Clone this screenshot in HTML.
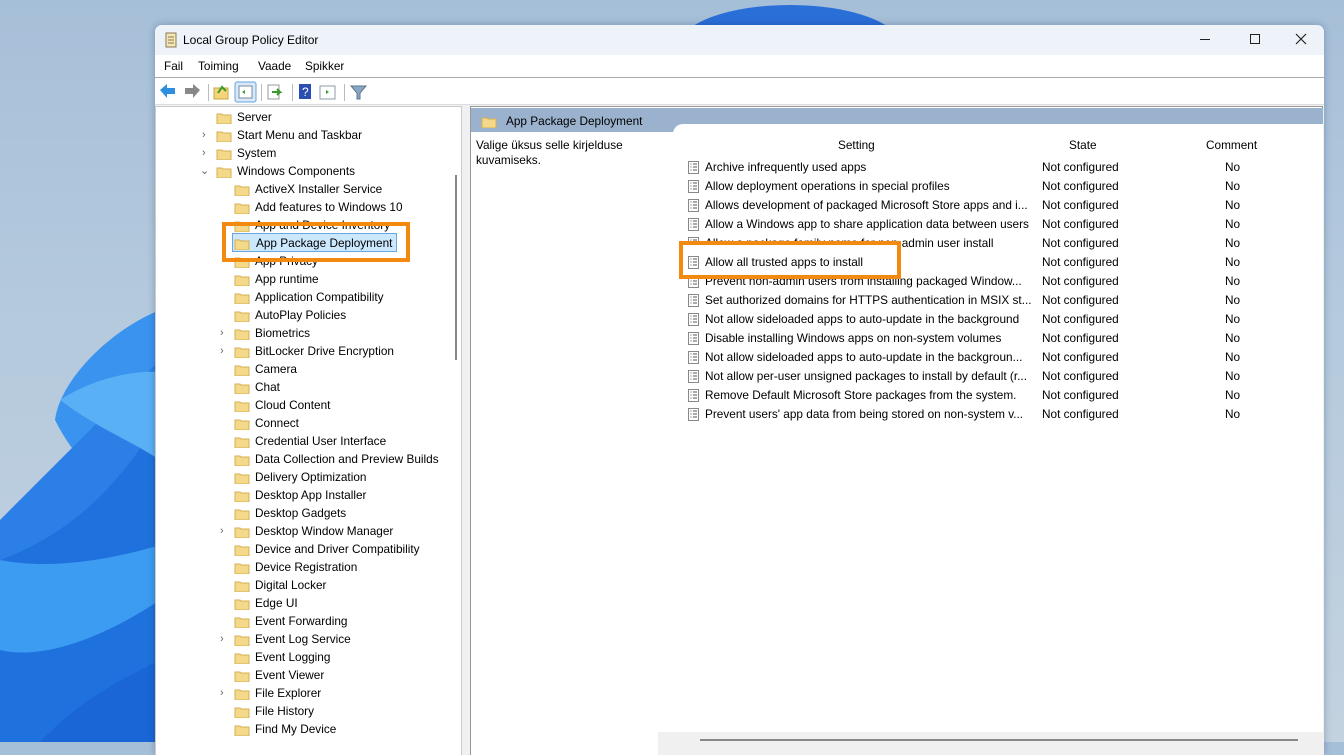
<!DOCTYPE html>
<html><head><meta charset="utf-8"><style>
*{margin:0;padding:0;box-sizing:border-box}
body{width:1344px;height:742px;overflow:hidden;position:relative;font-family:"Liberation Sans",sans-serif;font-size:11.8px;color:#000;
background:linear-gradient(180deg,#a6bfd8 0%,#b4c9dd 40%,#c3d2df 100%)}
.abs{position:absolute}
.win{position:absolute;left:155px;top:25px;width:1169px;height:730px;background:#f0f0f0;border-radius:7px 7px 0 0;overflow:hidden;box-shadow:0 0 8px rgba(0,40,90,.3)}
.t{position:absolute;white-space:nowrap;line-height:18px}
.fold{position:absolute;width:16px;height:13px}
.pol{position:absolute;width:11px;height:13px}
.chev{position:absolute;font-size:11px;color:#666;line-height:18px}
</style></head><body>
<svg class="abs" style="left:0;top:0" width="1344" height="742">
<ellipse cx="790" cy="45" rx="110" ry="40" fill="#2a6fd8"/>
<path d="M160 310 C110 330 60 380 55 420 C80 470 120 500 160 520Z" fill="#3a93ee"/>
<path d="M160 360 C100 420 40 480 0 520 L0 620 C40 600 100 580 160 575Z" fill="#2b7fe6"/>
<path d="M160 420 C120 480 80 530 0 560 L0 742 L160 742Z" fill="#1f72dd"/>
<path d="M60 400 C90 380 130 370 160 372 L160 460 C130 440 100 430 60 400Z" fill="#5ab0f5"/>
<path d="M0 560 C50 570 110 560 160 545 L160 600 C100 640 40 660 0 650Z" fill="#3c9cf2"/>
<path d="M40 742 C80 700 120 680 160 660 L160 742Z" fill="#1a66d6"/>
</svg>
<div class="win">
 <div class="abs" style="left:0;top:0;width:1169px;height:30px;background:#eef3f9"></div>
 <svg class="abs" style="left:9px;top:7px" width="14" height="16"><rect x="2" y="1" width="10" height="14" fill="#f4e7b8" stroke="#8a7a50"/><path d="M4 5h6M4 8h6M4 11h6" stroke="#8a7a50"/></svg>
 <div class="t" style="left:28px;top:6px;font-size:12px">Local Group Policy Editor</div>
 <div class="abs" style="left:1045px;top:14px;width:10px;height:1px;background:#222"></div>
 <div class="abs" style="left:1095px;top:9px;width:10px;height:10px;border:1px solid #222"></div>
 <svg class="abs" style="left:1140px;top:8px" width="12" height="12"><path d="M1 1L11 11M11 1L1 11" stroke="#222" stroke-width="1.2"/></svg>
 <div class="abs" style="left:0;top:30px;width:1169px;height:23px;background:#fff;border-bottom:1px solid #aaa"></div>
 <div class="t" style="left:9px;top:32px">Fail</div>
 <div class="t" style="left:43px;top:32px">Toiming</div>
 <div class="t" style="left:103px;top:32px">Vaade</div>
 <div class="t" style="left:150px;top:32px">Spikker</div>
 <div class="abs" style="left:0;top:53px;width:1169px;height:27px;background:#fff;border-bottom:1px solid #ddd"></div>
 <svg class="abs" style="left:3px;top:56px" width="220" height="22">
  <path d="M2 9l7-6v4h8v6H9v4z" fill="#2e8fe0"/>
  <path d="M42 9l-7-6v4h-8v6h8v4z" fill="#888"/>
  <rect x="50" y="3" width="1" height="17" fill="#bbb"/>
  <rect x="56" y="7" width="14" height="11" fill="#f3d57a" stroke="#c9a640"/><path d="M60 12l4-6 4 4" stroke="#3a9a2a" stroke-width="2" fill="none"/>
  <rect x="77" y="1" width="21" height="20" rx="2" fill="#d8eaf9" stroke="#6aa3d8"/><rect x="81" y="5" width="13" height="12" fill="#fff" stroke="#7a8a9a"/><path d="M87 9l-3 2 3 2z" fill="#3a9a2a"/>
  <rect x="103" y="3" width="1" height="17" fill="#bbb"/>
  <rect x="110" y="4" width="11" height="14" fill="#fff" stroke="#999"/><path d="M114 11h8l-3-3M122 11l-3 3" stroke="#3a9a2a" stroke-width="2" fill="none"/>
  <rect x="134" y="3" width="1" height="17" fill="#bbb"/>
  <rect x="141" y="3" width="12" height="15" fill="#2a4fb0"/><text x="144" y="15" fill="#fff" font-size="12" font-family="Liberation Sans">?</text>
  <rect x="162" y="5" width="15" height="13" fill="#fff" stroke="#8a9aaa"/><path d="M168 9l3 2-3 2z" fill="#3a9a2a"/>
  <rect x="186" y="3" width="1" height="17" fill="#bbb"/>
  <path d="M193 5h15l-6 7v6h-3v-6z" fill="#8aa6c0" stroke="#5a7590"/>
 </svg>
 <div class="abs" style="left:0;top:81px;width:307px;height:660px;background:#fff;border:1px solid #ccc"></div>
 <div class="abs" style="left:300px;top:150px;width:2px;height:185px;background:#888"></div>
 <div class="abs" style="left:315px;top:81px;width:853px;height:660px;background:#fff;border:1px solid #999"></div>
 <div class="abs" style="left:316px;top:83px;width:852px;height:24px;background:#9ab2cd"></div>
 <div class="abs" style="left:518px;top:99px;width:650px;height:640px;background:#fff;border-radius:10px 0 0 0"></div>
 <svg class="fold" style="left:326px;top:90px"><path d="M1 3h5l1 1h8v9H1z" fill="#f5d98a" stroke="#d4b050"/></svg>
 <div class="t" style="left:351px;top:87px">App Package Deployment</div>
 <div class="t" style="left:321px;top:113px;line-height:15px">Valige üksus selle kirjelduse<br>kuvamiseks.</div>
 <div class="t" style="left:683px;top:111px">Setting</div>
 <div class="t" style="left:914px;top:111px">State</div>
 <div class="t" style="left:1051px;top:111px">Comment</div>
 <div class="abs" style="left:503px;top:707px;width:665px;height:30px;background:#f0f0f0"></div>
 <div class="abs" style="left:545px;top:714px;width:598px;height:2px;background:#888"></div>
 <div id="L"></div><div id="R"></div>
 <div class="abs" style="left:67px;top:197px;width:188px;height:40px;border:4px solid #f28a0f"></div>
 <div class="abs" style="left:77px;top:208px;width:165px;height:19px;background:#cce8ff;border:1px solid #6aa7e0"></div>
 <div class="t" style="left:101px;top:209px">App Package Deployment</div>
 <svg class="fold" style="left:79px;top:212px"><path d="M1 3h5l1 1h8v9H1z" fill="#f5d98a" stroke="#d4b050"/></svg>
 <div class="abs" style="left:524px;top:216px;width:222px;height:38px;border:4px solid #f28a0f;background:#fff"></div>
 <svg class="pol" style="left:533px;top:231px"><rect x="0.5" y="0.5" width="10" height="12" fill="#fff" stroke="#888"/><path d="M2.5 3h1M2.5 6h1M2.5 9h1M5 3h4M5 6h4M5 9h4" stroke="#555"/></svg>
 <div class="t" style="left:550px;top:228px">Allow all trusted apps to install</div>
</div>
<script>
var F='<path d="M1 3h5l1 1h8v9H1z" fill="#f5d98a" stroke="#d4b050"/>';
var tree=[[1,0,'Server'],[1,1,'Start Menu and Taskbar'],[1,1,'System'],[1,2,'Windows Components'],[2,0,'ActiveX Installer Service'],[2,0,'Add features to Windows 10'],[2,0,'App and Device Inventory'],[2,0,''],[2,0,'App Privacy'],[2,0,'App runtime'],[2,0,'Application Compatibility'],[2,0,'AutoPlay Policies'],[2,1,'Biometrics'],[2,1,'BitLocker Drive Encryption'],[2,0,'Camera'],[2,0,'Chat'],[2,0,'Cloud Content'],[2,0,'Connect'],[2,0,'Credential User Interface'],[2,0,'Data Collection and Preview Builds'],[2,0,'Delivery Optimization'],[2,0,'Desktop App Installer'],[2,0,'Desktop Gadgets'],[2,1,'Desktop Window Manager'],[2,0,'Device and Driver Compatibility'],[2,0,'Device Registration'],[2,0,'Digital Locker'],[2,0,'Edge UI'],[2,0,'Event Forwarding'],[2,1,'Event Log Service'],[2,0,'Event Logging'],[2,0,'Event Viewer'],[2,1,'File Explorer'],[2,0,'File History'],[2,0,'Find My Device']];
var h='';tree.forEach(function(r,i){var y=83+i*18;var x=r[0]==1?61:79;
if(r[1]==1)h+='<div class="chev" style="left:'+(x-14)+'px;top:'+y+'px">&#x203A;</div>';
if(r[1]==2)h+='<div class="chev" style="left:'+(x-16)+'px;top:'+y+'px">&#x2304;</div>';
if(r[2]){h+='<svg class="fold" style="left:'+x+'px;top:'+(y+3)+'px">'+F+'</svg><div class="t" style="left:'+(x+21)+'px;top:'+y+'px">'+r[2]+'</div>';}});
document.getElementById('L').innerHTML=h;
var P=['Archive infrequently used apps','Allow deployment operations in special profiles','Allows development of packaged Microsoft Store apps and i...','Allow a Windows app to share application data between users','Allow a package family name for non-admin user install','Allow all trusted apps to install','Prevent non-admin users from installing packaged Window...','Set authorized domains for HTTPS authentication in MSIX st...','Not allow sideloaded apps to auto-update in the background','Disable installing Windows apps on non-system volumes','Not allow sideloaded apps to auto-update in the backgroun...','Not allow per-user unsigned packages to install by default (r...','Remove Default Microsoft Store packages from the system.','Prevent users\' app data from being stored on non-system v...'];
h='';P.forEach(function(p,i){var y=133+i*19;
h+='<svg class="pol" style="left:533px;top:'+(y+3)+'px"><rect x="0.5" y="0.5" width="10" height="12" fill="#fff" stroke="#888"/><path d="M2.5 3h1M2.5 6h1M2.5 9h1M5 3h4M5 6h4M5 9h4" stroke="#555"/></svg><div class="t" style="left:550px;top:'+y+'px">'+p+'</div><div class="t" style="left:887px;top:'+y+'px">Not configured</div><div class="t" style="left:1070px;top:'+y+'px">No</div>';});
document.getElementById('R').innerHTML=h;
</script>
</body></html>
